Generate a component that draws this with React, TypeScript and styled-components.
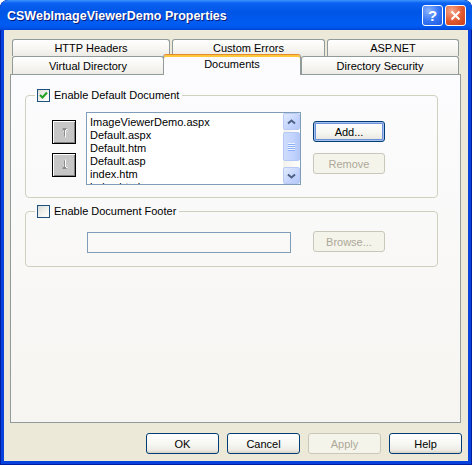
import React from "react";
import styled, { createGlobalStyle, css } from "styled-components";

const GlobalStyle = createGlobalStyle`
  html, body { margin: 0; padding: 0; background: #ffffff; }
  body { font-family: "Liberation Sans", Arial, sans-serif; font-size: 11px; color: #000; }
  * { box-sizing: border-box; }
`;

const Window = styled.div`
  width: 472px;
  height: 465px;
  display: flex;
  flex-direction: column;
  background: #0842DD;
  border-radius: 8px 8px 0 0;
  overflow: hidden;
  box-shadow: inset 0 0 0 1px #001EA0;
`;

const TitleBar = styled.div`
  height: 30px;
  flex: none;
  display: flex;
  align-items: center;
  gap: 2px;
  padding: 0 6px 0 7px;
  border-radius: 8px 8px 0 0;
  background: linear-gradient(
    to bottom,
    #3D95FF 0%,
    #0B62F2 10%,
    #0055E5 40%,
    #005CF2 80%,
    #0056EC 92%,
    #0043D6 100%
  );
`;

const Title = styled.span`
  flex: 1;
  color: #ffffff;
  font: bold 12.5px "Liberation Sans", Arial, sans-serif;
  text-shadow: 1px 1px 0 #0A1A7A;
  padding-top: 2px;
  white-space: nowrap;
`;

const CaptionButton = styled.div<{ $variant: "help" | "close" }>`
  width: 21px;
  height: 21px;
  border: 1px solid #ffffff;
  border-radius: 3px;
  display: flex;
  align-items: center;
  justify-content: center;
  color: #ffffff;
  font: bold 15px "Liberation Sans", Arial, sans-serif;
  background: ${(p) =>
    p.$variant === "close"
      ? "radial-gradient(circle at 30% 25%, #F4A88C 0%, #E2582E 55%, #C8401A 100%)"
      : "radial-gradient(circle at 30% 25%, #8DB4FF 0%, #3373F4 55%, #1F5BE0 100%)"};
`;

const Client = styled.div`
  flex: 1;
  margin: 0 4px 4px;
  background: #ECE9D8;
  padding: 9px 6px 0;
  display: flex;
  flex-direction: column;
`;

const TabControl = styled.div`
  width: 451px;
  display: flex;
  flex-direction: column;
`;

const TabRow = styled.div<{ $h: number; $gap: number }>`
  height: ${(p) => p.$h}px;
  display: flex;
  align-items: flex-start;
  padding-left: 2px;
  gap: ${(p) => p.$gap}px;
`;

const Tab = styled.div<{ $w: number; $selected?: boolean }>`
  width: ${(p) => p.$w}px;
  height: 100%;
  flex: none;
  display: flex;
  align-items: center;
  justify-content: center;
  border: 1px solid #919B9C;
  border-bottom: none;
  border-radius: 3px 3px 0 0;
  background: linear-gradient(#FFFFFF 0%, #F6F5F1 60%, #ECEBE5 100%);
  white-space: nowrap;
  ${(p) =>
    p.$selected &&
    css`
      height: 21px;
      margin-top: -2px;
      margin-left: -1px;
      position: relative;
      z-index: 2;
      border-top: 1px solid #E68B2C;
      background: #FCFCFE;
      box-shadow: inset 0 2px 0 #FFC83C;
      padding-bottom: 3px;
    `}
`;

const Page = styled.div`
  height: 349px;
  border: 1px solid #919B9C;
  background: linear-gradient(#FCFCFE, #F6F5F1);
  display: flex;
  flex-direction: column;
`;

const Group = styled.fieldset<{ $top: number }>`
  margin: ${(p) => p.$top}px 0 0 14px;
  width: 413px;
  min-width: 0;
  padding: 0;
  border: 1px solid #D0D0BF;
  border-radius: 4px;
`;

const GroupLegend = styled.legend`
  margin-left: 9px;
  padding: 0 3px 0 2px;
  height: 13px;
`;

const CheckLabel = styled.label`
  display: inline-flex;
  align-items: center;
  gap: 4px;
  height: 13px;
  line-height: 13px;
  white-space: nowrap;
`;

const CheckBox = styled.span`
  width: 13px;
  height: 13px;
  flex: none;
  border: 1px solid #1C5180;
  background: linear-gradient(135deg, #DCDCD7 0%, #F4F4F0 60%, #FFFFFF 100%);
  display: flex;
  align-items: center;
  justify-content: center;
`;

const ListRow = styled.div`
  display: flex;
  align-items: flex-start;
  padding: 10px 0 12px 26px;
`;

const ArrowColumn = styled.div`
  display: flex;
  flex-direction: column;
  gap: 9px;
  margin-top: 8px;
`;

const ArrowButton = styled.div`
  width: 24px;
  height: 24px;
  border: 1px solid #000000;
  background: #C6C6C6;
  box-shadow: inset 1px 1px 0 #FFFFFF, inset -1px -1px 0 #808080;
  display: flex;
  align-items: center;
  justify-content: center;
`;

const ListBox = styled.div`
  margin-left: 10px;
  width: 215px;
  height: 73px;
  border: 1px solid #7F9DB9;
  background: #ffffff;
  display: flex;
  overflow: hidden;
`;

const ListItems = styled.div`
  flex: 1;
  padding: 3px 0 0 3px;
  line-height: 13px;
  overflow: hidden;
`;

const ListItem = styled.div`
  height: 13px;
  white-space: nowrap;
`;

const ScrollBar = styled.div`
  width: 17px;
  flex: none;
  display: flex;
  flex-direction: column;
  background: linear-gradient(to right, #F3F1EC, #FEFEFB);
`;

const ScrollButton = styled.div`
  height: 17px;
  flex: none;
  border: 1px solid #B9CBF5;
  border-radius: 2px;
  background: linear-gradient(135deg, #E1EAFE 0%, #C3D3FD 60%, #B4C7F6 100%);
  display: flex;
  align-items: center;
  justify-content: center;
`;

const ScrollThumb = styled.div`
  margin-top: 2px;
  height: 29px;
  border: 1px solid #B4C8F6;
  border-radius: 2px;
  background: linear-gradient(to right, #CDDBFE, #C2D3FD 60%, #B4C7F6);
  display: flex;
  flex-direction: column;
  align-items: center;
  justify-content: center;
  gap: 1px;
`;

const Grip = styled.span`
  width: 7px;
  height: 1px;
  background: #EEF4FE;
  box-shadow: 0 1px 0 #8CB0F8;
`;

const ScrollSpacer = styled.div`
  flex: 1;
`;

const ButtonColumn = styled.div`
  display: flex;
  flex-direction: column;
  gap: 11px;
  margin: 9px 0 0 12px;
`;

const PushButton = styled.button<{ $default?: boolean; $w?: number }>`
  width: ${(p) => p.$w ?? 72}px;
  height: 21px;
  padding: 0;
  flex: none;
  font: 11px "Liberation Sans", Arial, sans-serif;
  color: #000000;
  border: 1px solid #003C74;
  border-radius: 3px;
  background: linear-gradient(#FFFFFF 0%, #F6F6F2 55%, #ECEBE4 85%, #D8D3C7 100%);
  ${(p) =>
    p.$default &&
    css`
      box-shadow: inset 0 0 0 1px #A8C2EE, inset 0 0 0 2px #6C92DC;
    `}
  &:disabled {
    border-color: #C9C7BA;
    background: #F5F4EA;
    color: #ACA899;
    box-shadow: none;
  }
`;

const FooterRow = styled.div`
  display: flex;
  align-items: flex-start;
  padding: 14px 0 13px 61px;
`;

const TextBox = styled.div`
  width: 204px;
  height: 21px;
  border: 1px solid #7F9DB9;
  background: transparent;
`;

const BrowseSlot = styled.div`
  margin: -1px 0 0 22px;
`;

const DialogButtons = styled.div`
  margin-top: 10px;
  display: flex;
  justify-content: flex-end;
  gap: 8px;
`;

const Check = () => (
  <svg width="9" height="9" viewBox="0 0 9 9">
    <path d="M1 4 L3.5 6.5 L8 1.5" fill="none" stroke="#21A121" strokeWidth="2" />
  </svg>
);

const MoveArrow = ({ down }: { down?: boolean }) => (
  <svg width="10" height="12" viewBox="0 0 10 12" style={{ transform: down ? "scaleY(-1)" : undefined }}>
    <g fill="none" strokeWidth="1">
      <path d="M3.5 2.5 H7.5 M5.5 2.5 V10.5 M3.5 4.5 L5.5 2.5 L7.5 4.5" stroke="#FFFFFF" transform="translate(1 1)" />
      <path d="M3.5 2.5 H7.5 M5.5 2.5 V10.5 M3.5 4.5 L5.5 2.5 L7.5 4.5" stroke="#8C8C8C" />
    </g>
  </svg>
);

const Chevron = ({ down }: { down?: boolean }) => (
  <svg width="9" height="6" viewBox="0 0 9 6">
    <path
      d={down ? "M1 1.5 L4.5 4.5 L8 1.5" : "M1 4.5 L4.5 1.5 L8 4.5"}
      fill="none"
      stroke="#4D6185"
      strokeWidth="2"
    />
  </svg>
);

const CloseGlyph = () => (
  <svg width="11" height="11" viewBox="0 0 11 11">
    <path d="M1.5 1.5 L9.5 9.5 M9.5 1.5 L1.5 9.5" stroke="#FFFFFF" strokeWidth="2" />
  </svg>
);

const topTabs = [
  { label: "HTTP Headers", w: 158 },
  { label: "Custom Errors", w: 153 },
  { label: "ASP.NET", w: 132 },
];

const bottomTabs = [
  { label: "Virtual Directory", w: 152 },
  { label: "Documents", w: 138, selected: true },
  { label: "Directory Security", w: 158 },
];

const documents = [
  "ImageViewerDemo.aspx",
  "Default.aspx",
  "Default.htm",
  "Default.asp",
  "index.htm",
  "index.html",
];

export default function App() {
  return (
    <>
      <GlobalStyle />
      <Window>
        <TitleBar>
          <Title>CSWebImageViewerDemo Properties</Title>
          <CaptionButton $variant="help">?</CaptionButton>
          <CaptionButton $variant="close">
            <CloseGlyph />
          </CaptionButton>
        </TitleBar>
        <Client>
          <TabControl>
            <TabRow $h={17} $gap={2}>
              {topTabs.map((t) => (
                <Tab key={t.label} $w={t.w}>
                  {t.label}
                </Tab>
              ))}
            </TabRow>
            <TabRow $h={18} $gap={0}>
              {bottomTabs.map((t) => (
                <Tab key={t.label} $w={t.w} $selected={t.selected}>
                  {t.label}
                </Tab>
              ))}
            </TabRow>
            <Page>
              <Group $top={14}>
                <GroupLegend>
                  <CheckLabel>
                    <CheckBox>
                      <Check />
                    </CheckBox>
                    Enable Default Document
                  </CheckLabel>
                </GroupLegend>
                <ListRow>
                  <ArrowColumn>
                    <ArrowButton>
                      <MoveArrow />
                    </ArrowButton>
                    <ArrowButton>
                      <MoveArrow down />
                    </ArrowButton>
                  </ArrowColumn>
                  <ListBox>
                    <ListItems>
                      {documents.map((d) => (
                        <ListItem key={d}>{d}</ListItem>
                      ))}
                    </ListItems>
                    <ScrollBar>
                      <ScrollButton>
                        <Chevron />
                      </ScrollButton>
                      <ScrollThumb>
                        <Grip />
                        <Grip />
                        <Grip />
                        <Grip />
                      </ScrollThumb>
                      <ScrollSpacer />
                      <ScrollButton>
                        <Chevron down />
                      </ScrollButton>
                    </ScrollBar>
                  </ListBox>
                  <ButtonColumn>
                    <PushButton $default>Add...</PushButton>
                    <PushButton disabled>Remove</PushButton>
                  </ButtonColumn>
                </ListRow>
              </Group>
              <Group $top={7}>
                <GroupLegend>
                  <CheckLabel>
                    <CheckBox />
                    Enable Document Footer
                  </CheckLabel>
                </GroupLegend>
                <FooterRow>
                  <TextBox />
                  <BrowseSlot>
                    <PushButton disabled>Browse...</PushButton>
                  </BrowseSlot>
                </FooterRow>
              </Group>
            </Page>
          </TabControl>
          <DialogButtons>
            <PushButton $w={73}>OK</PushButton>
            <PushButton $w={73}>Cancel</PushButton>
            <PushButton $w={73} disabled>
              Apply
            </PushButton>
            <PushButton $w={73}>Help</PushButton>
          </DialogButtons>
        </Client>
      </Window>
    </>
  );
}
